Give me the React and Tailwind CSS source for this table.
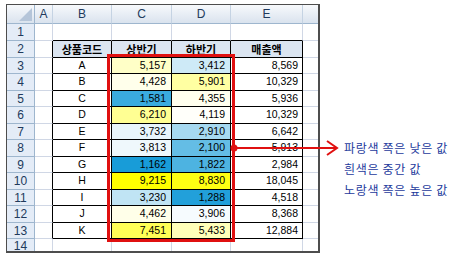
import React from 'react';

const cols = ['A', 'B', 'C', 'D', 'E', ''];
const widths = ['w-[18px]', 'w-[59px]', 'w-[60px]', 'w-[59px]', 'w-[72px]', 'w-[20px]'];

const data = [
  ['A', 5157, 3412, 8569],
  ['B', 4428, 5901, 10329],
  ['C', 1581, 4355, 5936],
  ['D', 6210, 4119, 10329],
  ['E', 3732, 2910, 6642],
  ['F', 3813, 2100, 5913],
  ['G', 1162, 1822, 2984],
  ['H', 9215, 8830, 18045],
  ['I', 3230, 1288, 4518],
  ['J', 4462, 3906, 8368],
  ['K', 7451, 5433, 12884],
];

const fmt = (n) => n.toLocaleString('en-US');

// 3-colour scale: min blue, median white, max yellow
const all = data.flatMap((r) => [r[1], r[2]]).sort((a, b) => a - b);
const lo = all[0];
const hi = all[all.length - 1];
const mid = (all[10] + all[11]) / 2;
const blue = [24, 156, 216];

function scale(v) {
  if (v <= mid) {
    const t = (v - lo) / (mid - lo);
    const c = blue.map((x) => Math.round(x + (255 - x) * t));
    return `rgb(${c[0]},${c[1]},${c[2]})`;
  }
  const t = (v - mid) / (hi - mid);
  return `rgb(255,255,${Math.round(255 * (1 - t))})`;
}

const rowH = (r) => (r === 1 ? 'h-[17px]' : r === 14 ? 'h-[14px]' : r % 2 === 0 ? 'h-[17px]' : 'h-[16px]');

function RowHead({ n }) {
  return (
    <div className="w-[28px] shrink-0 flex items-center justify-center bg-[#e4ecf7] border-r border-b border-[#9eb6ce] text-[12px] text-[#213a5c]">
      {n}
    </div>
  );
}

function Grid({ w, black, right }) {
  return (
    <div
      className={`${w} shrink-0 border-b ${black ? 'border-b-black' : 'border-b-[#d0d7e5]'} ${right ? 'border-r border-r-black' : 'border-r border-r-[#d0d7e5]'}`}
    />
  );
}

export default function App() {
  return (
    <div className="relative w-[452px] h-[259px] bg-white overflow-hidden font-['Liberation_Sans','Noto_Sans_CJK_KR',sans-serif]">
      <div className="flex items-start pt-[4px] pl-[6px]">
        {/* sheet */}
        <div className="w-[314px] h-[249px] shrink-0 overflow-hidden border-t border-l border-r-2 border-b-2 border-[#4d4d4d] bg-white">
          {/* column headers */}
          <div className="flex h-[19px]">
            <div className="w-[28px] shrink-0 relative bg-gradient-to-b from-[#f7f9fc] to-[#dae3ee] border-r border-b border-[#9eb6ce]">
              <svg className="absolute right-[2px] bottom-[2px]" width="13" height="13" viewBox="0 0 13 13">
                <polygon points="13,0 13,13 0,13" fill="#b5c5d9" />
              </svg>
            </div>
            {cols.map((c, i) => (
              <div
                key={i}
                className={`${widths[i]} shrink-0 flex items-center justify-center bg-gradient-to-b from-[#f7f9fc] to-[#dae3ee] border-r border-b border-r-[#c5d3e3] border-b-[#9eb6ce] text-[12px] text-[#213a5c]`}
              >
                {c}
              </div>
            ))}
          </div>

          {/* row 1 */}
          <div className={`flex ${rowH(1)}`}>
            <RowHead n={1} />
            <Grid w="w-[18px]" />
            <Grid w="w-[59px]" black />
            <Grid w="w-[60px]" black />
            <Grid w="w-[59px]" black />
            <Grid w="w-[72px]" black />
            <Grid w="w-[20px]" />
          </div>

          {/* row 2: table header */}
          <div className={`flex ${rowH(2)}`}>
            <RowHead n={2} />
            <Grid w="w-[18px]" right />
            {['상품코드', '상반기', '하반기', '매출액'].map((t, i) => (
              <div
                key={t}
                className={`${widths[i + 1]} shrink-0 flex items-center justify-center bg-[#dbe5f1] border-r border-b border-black text-[11px] font-bold text-black font-['Noto_Sans_CJK_KR',sans-serif] leading-none`}
              >
                {t}
              </div>
            ))}
            <Grid w="w-[20px]" />
          </div>

          {/* data rows */}
          {data.map((r, idx) => {
            const n = idx + 3;
            return (
              <div key={n} className={`flex ${rowH(n)}`}>
                <RowHead n={n} />
                <Grid w="w-[18px]" right />
                <div className="w-[59px] shrink-0 flex items-center justify-center border-r border-b border-black text-[10.5px] text-black">
                  {r[0]}
                </div>
                <div
                  className="w-[60px] shrink-0 flex items-center justify-end pr-[5px] border-r border-b border-black text-[10.5px] text-black"
                  style={{ backgroundColor: scale(r[1]) }}
                >
                  {fmt(r[1])}
                </div>
                <div
                  className="w-[59px] shrink-0 flex items-center justify-end pr-[5px] border-r border-b border-black text-[10.5px] text-black"
                  style={{ backgroundColor: scale(r[2]) }}
                >
                  {fmt(r[2])}
                </div>
                <div className="w-[72px] shrink-0 flex items-center justify-end pr-[4px] border-r border-b border-black text-[10.5px] text-black">
                  {fmt(r[3])}
                </div>
                <Grid w="w-[20px]" />
              </div>
            );
          })}

          {/* row 14 */}
          <div className={`flex ${rowH(14)}`}>
            <RowHead n={14} />
            <Grid w="w-[18px]" />
            <Grid w="w-[59px]" />
            <Grid w="w-[60px]" />
            <Grid w="w-[59px]" />
            <Grid w="w-[72px]" />
            <Grid w="w-[20px]" />
          </div>
        </div>

        {/* notes */}
        <div className="ml-[24px] mt-[133px] flex flex-col text-[12px] leading-[21px] tracking-[0.7px] text-[#1d3a9c] font-['Noto_Sans_CJK_KR',sans-serif] whitespace-nowrap">
          <span>파랑색 쪽은 낮은 값</span>
          <span>흰색은 중간 값</span>
          <span>노랑색 쪽은 높은 값</span>
        </div>
      </div>

      {/* red highlight over C3:D13 */}
      <div className="absolute left-[107px] top-[54px] w-[128px] h-[188px] border-[3px] border-[#e01010]" />

      {/* arrow */}
      <svg className="absolute left-[228px] top-[138px]" width="114" height="22" viewBox="0 0 114 22">
        <circle cx="6" cy="10" r="3.5" fill="#e01010" />
        <line x1="6" y1="10" x2="109" y2="10" stroke="#e01010" strokeWidth="2" />
        <polyline points="99,3 109,10 99,17" fill="none" stroke="#e01010" strokeWidth="2" />
      </svg>
    </div>
  );
}
